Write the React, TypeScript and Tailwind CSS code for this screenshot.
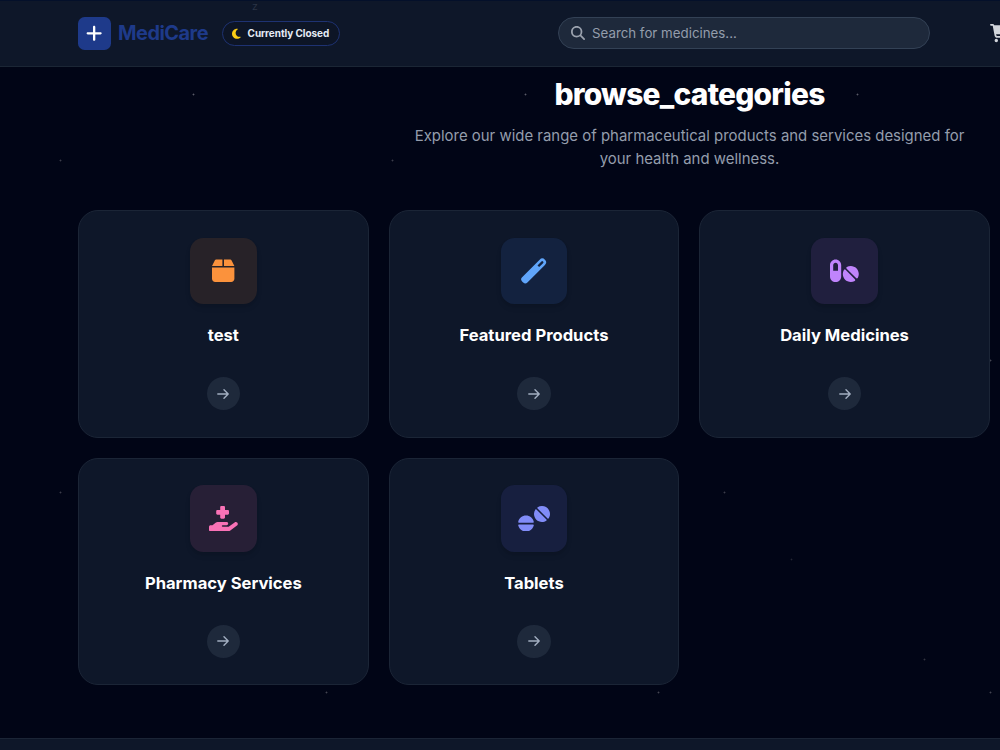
import type { ReactNode } from 'react'
import {
  FaBox,
  FaCartShopping,
  FaHandHoldingMedical,
  FaMagnifyingGlass,
  FaMoon,
  FaPills,
  FaPlus,
  FaTablets,
} from 'react-icons/fa6'

type Category = {
  name: string
  icon: ReactNode
  tone: string
}

function TubeIcon() {
  return (
    <svg viewBox="0 0 26 26" className="h-[25.6px] w-[25.6px]">
      <g transform="rotate(45 13 13)">
        <path
          fill="currentColor"
          fillRule="evenodd"
          d="M13-3a3.8 3.8 0 0 1 3.8 3.8v25.2a3 3 0 0 1-3 3h-1.6a3 3 0 0 1-3-3V.8A3.8 3.8 0 0 1 13-3Zm0 2.7a1.2 1.2 0 0 0-1.2 1.2v5.6h2.4V.9A1.2 1.2 0 0 0 13-.3Z"
        />
      </g>
    </svg>
  )
}

function ArrowIcon() {
  return (
    <svg
      viewBox="0 0 12 12"
      className="h-3 w-3"
      fill="none"
      stroke="currentColor"
      strokeWidth="1.4"
      strokeLinecap="round"
      strokeLinejoin="round"
    >
      <path d="M0.8 6h10.4M7 1.8 11.2 6 7 10.2" />
    </svg>
  )
}

const categories: Category[] = [
  {
    name: 'test',
    icon: <FaBox className="h-[25.6px] w-[22.4px]" />,
    tone: 'bg-[#272228] text-[#fb923c]',
  },
  {
    name: 'Featured Products',
    icon: <TubeIcon />,
    tone: 'bg-[#13223f] text-[#60a5fa]',
  },
  {
    name: 'Daily Medicines',
    icon: <FaPills className="h-[25.6px] w-[28.8px]" />,
    tone: 'bg-[#201f3e] text-[#c084fc]',
  },
  {
    name: 'Pharmacy Services',
    icon: <FaHandHoldingMedical className="h-[25.6px] w-[28.8px]" />,
    tone: 'bg-[#271f36] text-[#f972b6]',
  },
  {
    name: 'Tablets',
    icon: <FaTablets className="h-[25.6px] w-8" />,
    tone: 'bg-[#171f3f] text-[#818cf8]',
  },
]

function Header() {
  return (
    <header className="relative flex h-[67px] w-[1301px] shrink-0 items-center border-t border-b border-t-[#04102a] border-b-[#1b2635] bg-[#0e1729] pl-[78px]">
      <div className="flex h-[33px] w-[33px] items-center justify-center rounded-[6.6px] bg-[#1e3a8a] text-white">
        <FaPlus className="h-[18.6px] w-[16.3px]" />
      </div>
      <span className="ml-[7px] w-[90px] pb-0.5 text-[19.9px] leading-7 font-bold tracking-[-0.5px] text-[#1e3a8a]">
        MediCare
      </span>
      <div className="ml-[14px] flex h-[25px] w-[118px] items-center rounded-full border border-[#1e3272] bg-[#0d1526] pl-[9px] text-[9.96px] font-bold tracking-[-0.05px] whitespace-nowrap text-[#e5ebf5]">
        <FaMoon className="mr-[6.9px] h-[11.6px] w-[8.7px] text-[#facc15]" />
        Currently Closed
      </div>
      <span className="absolute -top-px left-[252px] text-[10.5px] leading-[14px] text-[#2b3446]">
        z
      </span>
      <div className="mb-px ml-[218px] flex h-[31.6px] w-[372px] items-center rounded-full border border-[#334155] bg-[#1e293b] pl-3">
        <FaMagnifyingGlass className="mr-[7px] h-[14px] w-[14px] text-[#9ca3af]" />
        <span className="pt-[1.4px] text-[13.3px] text-[#949dac]">
          Search for medicines...
        </span>
      </div>
      <FaCartShopping className="ml-[60px] h-[18.3px] w-[20.6px] shrink-0 text-[#d1d5db]" />
    </header>
  )
}

function CategoryCard({ category }: { category: Category }) {
  return (
    <li className="flex h-[227.6px] flex-col items-center rounded-[20px] border border-[#1b2536] bg-[#0e1729] pt-[26.6px]">
      <div
        className={`flex h-[66.4px] w-[66.4px] shrink-0 items-center justify-center rounded-[13.3px] shadow-md ${category.tone}`}
      >
        {category.icon}
      </div>
      <h2 className="mt-5 text-[16.6px] leading-[23.2px] font-bold text-white">
        {category.name}
      </h2>
      <div className="mt-[29.6px] flex h-[33.2px] w-[33.2px] items-center justify-center rounded-full bg-[#1e293b] text-[#a3afc1]">
        <ArrowIcon />
      </div>
    </li>
  )
}

export default function App() {
  return (
    <div className="flex h-[750px] w-[1000px] flex-col overflow-hidden bg-[#010516] bg-[radial-gradient(circle_at_193.5px_94.5px,#5a5c68_0.5px,transparent_1.3px),radial-gradient(circle_at_60.5px_160.5px,#3c3e4b_0.5px,transparent_1.3px),radial-gradient(circle_at_127.5px_227.5px,#252733_0.5px,transparent_1.2px),radial-gradient(circle_at_260.5px_327.5px,#333541_0.5px,transparent_1.3px),radial-gradient(circle_at_326.5px_28.5px,#444652_0.5px,transparent_1.3px)] bg-[length:332px_332px] font-['Inter',sans-serif]">
      <Header />
      <main className="h-[671px] w-[1301px] shrink-0 pl-[78px]">
        <section className="flex h-[143.3px] flex-col items-center pt-[9px] text-center">
          <h1 className="text-[29.9px] leading-9 font-extrabold tracking-[-0.75px] text-white">
            browse_categories
          </h1>
          <p className="mt-[12.8px] w-[558px] text-[14.94px] leading-[23.2px] text-[#949dac]">
            Explore our wide range of pharmaceutical products and services
            designed for your health and wellness.
          </p>
        </section>
        <ul className="grid w-[911.9px] grid-cols-3 gap-[19.9px]">
          {categories.map((category) => (
            <CategoryCard key={category.name} category={category} />
          ))}
        </ul>
      </main>
      <footer className="h-3 shrink-0 border-t border-[#1b2536] bg-[#0e1729]" />
    </div>
  )
}
